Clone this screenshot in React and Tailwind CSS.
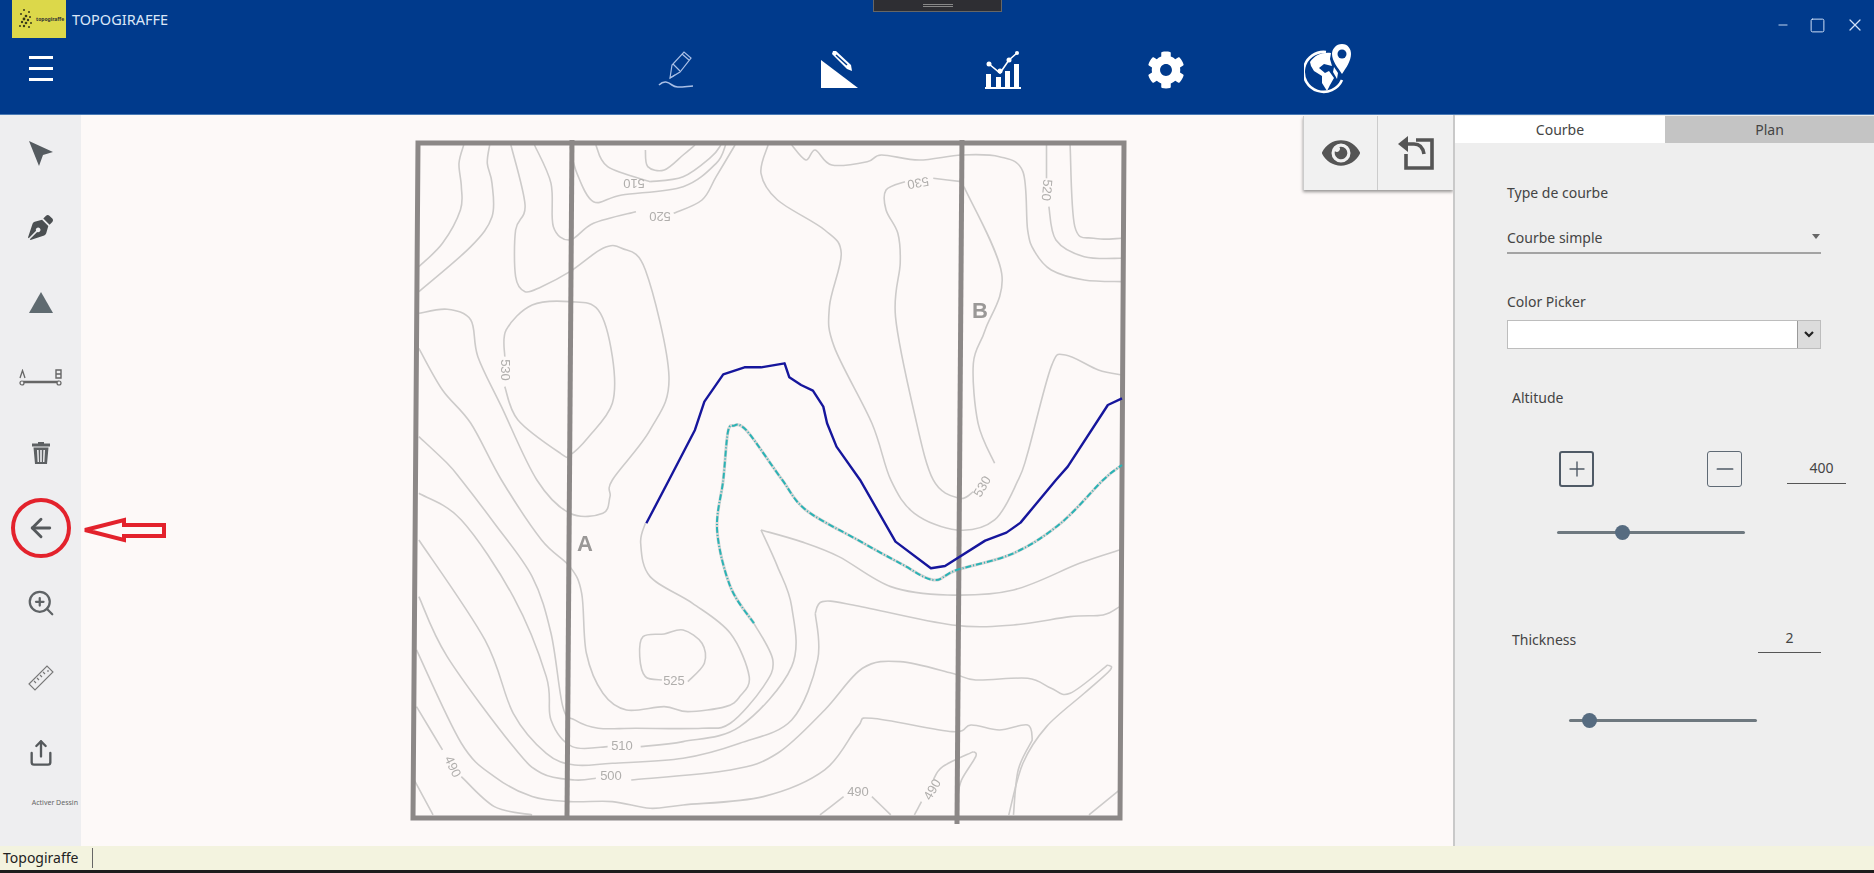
import React from "react";
import { ArrowLeft, ZoomIn, Share, Minus, Plus, Square, X } from "lucide-react";
import { FaPenNib, FaCog, FaEye } from "react-icons/fa";

// contour points were read off crops of the map, this maps them back to page pixels
const CROP = "translate(400 130) scale(.4719 .3333)";

const smooth = (pts) => {
  let d = `M${pts[0][0]} ${pts[0][1]}`;
  for (let i = 0; i < pts.length - 1; i++) {
    const p0 = pts[i - 1] || pts[i];
    const p1 = pts[i];
    const p2 = pts[i + 1];
    const p3 = pts[i + 2] || p2;
    const c1x = p1[0] + (p2[0] - p0[0]) / 6;
    const c1y = p1[1] + (p2[1] - p0[1]) / 6;
    const c2x = p2[0] - (p3[0] - p1[0]) / 6;
    const c2y = p2[1] - (p3[1] - p1[1]) / 6;
    d += ` C${c1x} ${c1y} ${c2x} ${c2y} ${p2[0]} ${p2[1]}`;
  }
  return d;
};

const straight = (pts) => "M" + pts.map((p) => p.join(" ")).join(" L");

const contours = [
  [[135,45],[125,100],[130,170],[128,240],[90,340],[40,410]],
  [[190,45],[185,100],[195,160],[195,260],[150,350],[40,485]],
  [[285,45],[320,160],[325,290],[360,330],[410,280],[500,245]],
  [[580,250],[640,210],[670,140],[710,45]],
  // the big one round the 530 summit, closes below the A line
  [[235,45],[265,225],[245,300],[245,440],[265,485],[300,470],[360,425],[430,355],[470,355],[520,420],[570,740],[530,900],[450,1050],[445,1100],[430,1150],[360,1150],[290,1050],[215,830],[165,680],[150,570],[100,538],[40,550]],
  [[222,680],[225,600],[280,525],[360,515],[420,540],[450,680],[450,820],[400,920],[360,975],[340,970],[250,870],[222,770]],
  // left diagonals
  [[40,655],[90,780],[150,880],[215,1050],[300,1230],[360,1310],[385,1390],[395,1570],[430,1690],[480,1740],[560,1730],[610,1745],[690,1730],[720,1700],[740,1640],[700,1510],[620,1420],[530,1340],[510,1240],[520,1180]],
  [[40,920],[100,1000],[130,1050],[200,1180],[280,1340],[320,1510],[345,1730],[370,1770],[420,1795],[500,1795],[640,1795],[700,1780],[770,1670],[790,1590],[750,1480]],
  [[440,1850],[365,1850],[320,1770],[310,1640],[240,1400],[130,1170],[40,1090]],
  [[765,1200],[800,1310],[830,1430],[830,1610],[720,1790],[600,1835],[510,1850]],
  [[765,1200],[850,1235],[930,1280],[1040,1370],[1160,1395],[1300,1380],[1440,1300],[1525,1260]],
  [[880,1450],[895,1415],[960,1425],[1170,1485],[1300,1485],[1420,1460],[1490,1455],[1525,1430]],
  [[880,1450],[885,1590],[830,1770],[720,1840],[600,1885],[450,1900],[370,1905],[310,1870],[240,1750],[180,1530],[40,1230]],
  [[555,1650],[520,1640],[508,1580],[515,1520],[560,1512],[600,1500],[640,1540],[645,1600],[610,1655]],
  [[1500,1605],[1420,1690],[1380,1675],[1330,1645],[1220,1650],[1170,1630],[1060,1595],[980,1615],[900,1740],[800,1870],[700,1920],[490,1950]],
  [[415,1945],[370,1950],[300,1930],[240,1850],[100,1580],[40,1400]],
  [[1500,1605],[1505,1620],[1450,1690],[1370,1790],[1320,1900],[1290,2055]],
  [[1340,1830],[1330,1785],[1270,1800],[1210,1785],[1170,1805],[1000,1765],[970,1790],[900,1920],[770,2000],[600,2025],[530,2035],[450,2015],[360,2015],[280,2000],[200,1940],[130,1840],[35,1560]],
  [[1340,1830],[1310,1920],[1300,2055]],
  [[1215,1865],[1150,1910],[1130,1950]],
  [[1105,2015],[1090,2055]],
  [[1215,1865],[1220,1880],[1190,1950],[1180,2010]],
  [[890,2055],[940,2000]],
  [[1000,2000],[1040,2055]],
  [[35,1730],[90,1860]],
  [[130,1940],[200,2030],[280,2055]],
  [[30,1950],[70,2055]],
  [[1525,1980],[1460,2055]],
  // top middle and right
  [[415,45],[440,110],[530,155]],
  [[530,155],[600,140],[660,80],[680,45]],
  [[520,60],[525,110],[560,120],[600,75],[625,45]],
  [[360,50],[375,130],[410,215],[470,195],[600,170],[670,100],[690,45]],
  [[780,45],[765,130],[800,210],[900,300],[935,370],[910,530],[920,650],[1000,880],[1040,1050],[1090,1150],[1180,1200],[1260,1170],[1310,1050],[1330,970],[1380,710],[1410,675],[1480,720],[1530,735]],
  [[830,45],[860,90],[880,60],[915,105],[990,95],[1020,75],[1100,90],[1190,75],[1270,80],[1320,125],[1330,300],[1345,365],[1380,420],[1450,450],[1530,455]],
  [[1370,45],[1370,145]],
  [[1375,230],[1390,330],[1450,380],[1530,385]],
  [[1420,45],[1430,290],[1470,325],[1530,325]],
  [[1190,155],[1130,145]],
  [[1070,155],[1030,180],[1030,240],[1055,310],[1060,400],[1050,560],[1090,850],[1130,1050],[1185,1105],[1215,1085]],
  [[1195,170],[1275,430],[1240,600],[1215,700],[1225,880],[1260,1000]],
];

const blue = [
  [[522,1180],[570,1050],[625,900],[645,815],[685,733],[730,712],[765,712],[815,700],[825,742],[850,765],[875,782],[897,830],[905,880],[925,950],[975,1050],[1050,1235],[1125,1315],[1155,1308],[1240,1232],[1285,1208],[1315,1178],[1390,1050],[1415,1010],[1500,825],[1530,805]],
];
const teal = [
  [[750,1480],[700,1370],[672,1200],[685,1050],[695,905],[708,887],[722,887],[745,920],[810,1050],[860,1140],[970,1230],[1060,1300],[1130,1350],[1180,1320],[1300,1270],[1400,1180],[1490,1050],[1530,1005]],
];

const labels = [
  ["510", 634, 182, 180], ["520", 660, 215, 180], ["530", 918, 182, 170], ["520", 1046, 190, 95],
  ["530", 504, 370, 90], ["525", 674, 682, 0], ["510", 622, 747, 0], ["500", 611, 777, 0],
  ["490", 452, 767, 65], ["490", 858, 793, 0], ["490", 933, 790, -60], ["530", 983, 487, -60],
];

const Lines = ({ list, build = smooth, ...rest }) => (
  <g transform={CROP} fill="none" {...rest}>
    {list.map((pts, i) => (
      <path key={i} d={build(pts)} vectorEffect="non-scaling-stroke" />
    ))}
  </g>
);

const MapDrawing = () => (
  <svg viewBox="81 115 1372 731" className="w-full h-full blur-[0.6px]" fontFamily="'Liberation Sans', sans-serif">
    <Lines list={contours} stroke="#cdcbca" strokeWidth="1.6" />
    <Lines list={teal} stroke="#d6d4d3" strokeWidth="3" />
    {labels.map(([t, x, y, r], i) => (
      <text key={i} x={x} y={y} fontSize="13" fill="#b0aeac" textAnchor="middle" dominantBaseline="middle" transform={`rotate(${r} ${x} ${y})`}>
        {t}
      </text>
    ))}
    <g stroke="#8c8887" strokeWidth="5" fill="none">
      <path d="M418 143 L1124 143 L1120 818 L413 818 Z" />
      <path d="M572 140 L567 818" />
      <path d="M962 140 L957 824" />
    </g>
    <text x="980" y="318" fontSize="22" fontWeight="700" fill="#9a9897" textAnchor="middle">B</text>
    <text x="585" y="551" fontSize="22" fontWeight="700" fill="#9a9897" textAnchor="middle">A</text>
    <Lines list={teal} stroke="#2ab3b5" strokeWidth="2" strokeDasharray="6 2 1 2" />
    <Lines list={blue} build={straight} stroke="#16169c" strokeWidth="2.4" strokeLinejoin="round" />
  </svg>
);

// header icons
const LogoDots = () => (
  <svg width="16" height="20" viewBox="0 0 16 20" fill="#3a3a1a">
    <circle cx="6" cy="1" r="1" /><circle cx="11" cy="3" r="1" /><circle cx="3" cy="5" r="1" />
    <circle cx="8" cy="7" r="1.3" /><circle cx="12" cy="8" r="1" /><circle cx="6" cy="10" r="1.4" />
    <circle cx="10" cy="11" r="1.2" /><circle cx="4" cy="13" r="1.2" /><circle cx="8" cy="14" r="1.3" />
    <circle cx="13" cy="14" r="1" /><circle cx="2" cy="17" r="1" /><circle cx="6" cy="17" r="1.2" />
    <circle cx="11" cy="18" r="1" />
  </svg>
);

const PencilWave = () => (
  <svg width="38" height="38" viewBox="0 0 38 38" fill="none" stroke="#a9bfe6" strokeWidth="1.2">
    <path d="M13 27 L15 14 L27 1 L34 7 L23 21 Z" />
    <path d="M16 13 L23 20 M25 3 L32 9 M13 27 L18 24" />
    <path d="M2 34 C7 29 11 31 15 34 S23 36 36 35" strokeWidth="1.6" />
  </svg>
);

const SlopeIcon = () => (
  <svg width="38" height="38" viewBox="0 0 38 38" fill="#fff">
    <path d="M0 9 L37 37 L0 37 Z" />
    <path d="M12 0 L15 0 L30 14 L31 20 L26 18 L11 3 Z" />
    <path d="M15 4 L26 14" stroke="#003a8c" strokeWidth="1.5" />
  </svg>
);

const ChartIcon = () => (
  <svg width="38" height="38" viewBox="0 0 38 38" fill="#fff">
    <path d="M1 36 H37 V38 H1 Z" />
    <path d="M2 23 h5 v13 h-5z M12 26 h5 v10 h-5z M21 20 h5 v16 h-5z M30 13 h5 v23 h-5z" />
    <path d="M5 13 L16 22 L25 9 L33 2" stroke="#fff" strokeWidth="1.6" fill="none" />
    <circle cx="5" cy="13" r="2.5" />
    <circle cx="16" cy="20" r="2.5" />
    <circle cx="25" cy="9" r="2.5" />
    <circle cx="33" cy="2" r="2" />
  </svg>
);

const GlobePin = () => (
  <svg width="48" height="50" viewBox="0 0 48 50">
    <path d="M22 8 A20 20 0 1 0 38 36" fill="none" stroke="#fff" strokeWidth="2.6" />
    <path d="M6 18 C11 11 18 8 27 9 L26 15 L28 22 L20 20 L15 24 L21 29 L25 27 L30 34 L26 41 L23 47 L18 39 L18 32 L10 27 L7 22 Z" fill="#fff" />
    <path d="M30 23 L34 29 L33 35 L29 28 Z" fill="#fff" />
    <path d="M38 0 C32 0 28 5 28 10 C28 17 34 24 38 30 C42 24 47 17 47 10 C47 5 44 0 38 0 Z" fill="#fff" />
    <circle cx="38" cy="10" r="4.5" fill="#003a8c" />
  </svg>
);

// side bar icons
const CursorIcon = () => (
  <svg width="26" height="26" viewBox="0 0 26 26" fill="#555b60">
    <path d="M1 1 L25 12 L15 15 L11 26 Z" />
  </svg>
);

const TriangleIcon = () => (
  <svg width="26" height="22" viewBox="0 0 26 22" fill="#5f6a70">
    <path d="M13 0 L25 21 L1 21 Z" />
  </svg>
);

const SegmentIcon = () => (
  <svg width="44" height="18" viewBox="0 0 44 18" fill="none" stroke="#666">
    <path d="M4 13 H40" strokeWidth="2.4" />
    <circle cx="3" cy="14" r="2" strokeWidth="1.2" fill="#eeeef0" />
    <circle cx="40" cy="14" r="2" strokeWidth="1.2" fill="#eeeef0" />
    <path d="M1 9 L3.5 1.5 L6 9" strokeWidth="1.3" />
    <path d="M37 1 H42 V9 H37 Z M37 5 H42" strokeWidth="1.4" />
  </svg>
);

const TrashIcon = () => (
  <svg width="20" height="22" viewBox="0 0 20 22" fill="#5d6063">
    <path d="M7 0 H13 V1.5 H19 V4.5 H1 V1.5 H7 Z" />
    <path d="M2.5 5.5 H17.5 L16 22 H4 Z M6 8 L6.6 20 H8 L7.6 8 Z M9.2 8 V20 H10.8 V8 Z M12.4 8 L12 20 H13.4 L14 8 Z" fillRule="evenodd" />
  </svg>
);

const RulerIcon = () => (
  <svg width="26" height="26" viewBox="0 0 26 26" fill="none" stroke="#777" strokeWidth="1.1">
    <path d="M1 19 L19 1 L25 7 L7 25 Z" />
    <path d="M6 16 L8 18 M9 13 L11 15 M12 10 L14 12 M15 7 L17 9" />
    <circle cx="20" cy="6" r="0.8" fill="#555" stroke="none" />
  </svg>
);

const UndoBox = () => (
  <svg width="36" height="36" viewBox="0 0 36 36" fill="none" stroke="#555" strokeWidth="3.6">
    <path d="M18 5 H34 V33 H8 V19" />
    <path d="M3 9 H16 C22 9 25 13 26 19" />
    <path d="M0 9 L10 1 V17 Z" fill="#555" stroke="none" />
  </svg>
);

const toolSlots = [
  { id: "cursor", icon: <CursorIcon /> },
  { id: "pen", icon: <FaPenNib size={25} color="#4b4f52" /> },
  { id: "triangle", icon: <TriangleIcon /> },
  { id: "segment", icon: <SegmentIcon /> },
  { id: "trash", icon: <TrashIcon /> },
  { id: "back", icon: <ArrowLeft size={30} color="#55595c" strokeWidth={2.3} /> },
  { id: "zoom", icon: <ZoomIn size={30} color="#5f6366" strokeWidth={1.8} /> },
  { id: "ruler", icon: <RulerIcon /> },
  { id: "share", icon: <Share size={28} color="#55595c" strokeWidth={2} /> },
];

const Sidebar = () => (
  <aside className="relative z-10 w-[81px] shrink-0 bg-[#eeeef0] flex flex-col items-center">
    {toolSlots.map((t) => (
      <div key={t.id} className="h-[75px] w-full flex items-center justify-center">
        {t.icon}
      </div>
    ))}
    <p className="mt-[8px] self-end pr-[3px] text-[7px] leading-[9px] text-[#666]">Activer Dessin</p>

    {/* annotation drawn over the screenshot */}
    <div className="absolute left-[11px] top-[383px] w-[60px] h-[60px] rounded-full border-4 border-[#e3222c]" />
    <svg className="absolute left-[81px] top-[402px]" width="86" height="26" viewBox="0 0 86 26" fill="none" stroke="#e3222c" strokeWidth="4">
      <path d="M4 13 L43 3 V8 H83 V19 H43 V23 Z" />
    </svg>
  </aside>
);

const Slider = ({ thumb, className }) => (
  <div className={`relative h-[3px] w-[188px] bg-[#6e787f] rounded-full ${className}`}>
    <div className="absolute top-[-6px] w-[15px] h-[15px] rounded-full bg-[#566b80]" style={{ left: thumb }} />
  </div>
);

const RightPanel = () => (
  <aside className="w-[421px] shrink-0 bg-[#eeeeee] border-l-2 border-[#c9c9c9] text-[14px] text-[#444]">
    <div className="flex h-[28px] pt-[1px]">
      <div className="w-[210px] bg-white flex items-center justify-center text-[14px]">Courbe</div>
      <div className="flex-1 bg-[#c4c4c4] flex items-center justify-center text-[14px]">Plan</div>
    </div>

    <div className="pl-[52px] pt-[39px]">
      <p className="h-[22px] leading-[22px]">Type de courbe</p>
      <div className="relative mt-[24px] h-[26px] w-[314px] border-b-2 border-[#a3a3a3] leading-[20px]">
        Courbe simple
        <span className="absolute right-[1px] top-[6px] border-x-[4px] border-t-[5px] border-x-transparent border-t-[#666]" />
      </div>
      <p className="mt-[37px] h-[22px] leading-[22px]">Color Picker</p>
      <div className="mt-[7px] h-[29px] w-[314px] flex bg-white border border-[#bdbdbd]">
        <div className="flex-1" />
        <div className="w-[23px] bg-[#dcdcdc] border-l border-[#9a9a9a] flex items-center justify-center">
          <svg width="10" height="7" viewBox="0 0 10 7" fill="none" stroke="#222" strokeWidth="2.2">
            <path d="M1 1 L5 5 L9 1" />
          </svg>
        </div>
      </div>

      <p className="mt-[38px] ml-[5px] h-[22px] leading-[22px]">Altitude</p>
      <div className="mt-[42px] ml-[52px] flex items-center">
        <div className="w-[35px] h-[36px] shrink-0 border-2 border-[#4f5a66] rounded-[3px] flex items-center justify-center">
          <Plus size={24} color="#4f5a66" strokeWidth={1.4} />
        </div>
        <div className="ml-[113px] w-[35px] h-[36px] shrink-0 border border-[#5f6a75] rounded-[3px] flex items-center justify-center">
          <Minus size={26} color="#4f5a66" strokeWidth={1.6} />
        </div>
        <div className="ml-[45px] w-[59px] h-[30px] shrink-0 border-b border-[#555] text-center leading-[28px] pl-[10px]">400</div>
      </div>
      <Slider thumb="58px" className="mt-[44px] ml-[50px]" />

      <div className="mt-[93px] ml-[5px] flex items-center h-[26px]">
        <p className="w-[61px] leading-[22px]">Thickness</p>
        <div className="ml-[185px] w-[63px] h-[26px] border-b border-[#555] text-center leading-[22px]">2</div>
      </div>
      <Slider thumb="13px" className="mt-[66px] ml-[62px]" />
    </div>
  </aside>
);

const Header = () => (
  <header className="relative h-[115px] shrink-0 bg-[#003a8c] border-b border-[#4a7ab5]">
    <div className="flex items-start h-[38px]">
      <div className="ml-[12px] w-[54px] h-[38px] bg-[#dcd84a] flex items-center pl-[6px] gap-[2px]">
        <LogoDots />
        <span className="text-[5px] leading-[6px] font-bold text-[#333]">topogiraffe</span>
      </div>
      <span className="ml-[6px] mt-[9px] text-[14.5px] leading-[20px] text-[#dbe6f7]">TOPOGIRAFFE</span>
      <div className="flex-1" />
      <div className="flex items-center gap-[19px] pr-[9px] pt-[15px] text-[#cfe0f7]">
        <Minus size={14} strokeWidth={1.6} />
        <Square size={17} strokeWidth={1.4} />
        <X size={20} strokeWidth={1.5} />
      </div>
    </div>

    {/* the little dark handle at the top of the window */}
    <div className="absolute left-[873px] top-0 w-[129px] h-[12px] bg-[#2e2e33] border border-t-0 border-[#666] flex flex-col items-center justify-center gap-[1px]">
      <div className="w-[30px] h-px bg-[#888]" />
      <div className="w-[30px] h-px bg-[#888]" />
    </div>

    <div className="flex mt-[5px] h-[54px]">
      <div className="ml-[29px] mt-[13px] w-[24px] flex flex-col gap-[8px]">
        <div className="h-[3px] bg-white" />
        <div className="h-[3px] bg-white" />
        <div className="h-[3px] bg-white" />
      </div>
      <div className="ml-[604px] flex items-center h-[54px]">
        <PencilWave />
        <div className="ml-[126px]"><SlopeIcon /></div>
        <div className="ml-[125px]"><ChartIcon /></div>
        <div className="ml-[125px]"><FaCog size={38} color="#fff" /></div>
        <div className="ml-[119px] -mt-[3px]"><GlobePin /></div>
      </div>
    </div>
  </header>
);

export default function App() {
  return (
    <div className="h-[873px] w-[1874px] flex flex-col overflow-hidden bg-black" style={{ fontFamily: "'Noto Sans', 'Open Sans', sans-serif" }}>
      <Header />
      <div className="flex h-[731px] shrink-0">
        <Sidebar />
        <main className="relative flex-1 bg-[#fdf9f8] overflow-hidden">
          <MapDrawing />
          <div className="absolute right-0 top-[1px] flex shadow-[0_2px_3px_rgba(0,0,0,0.4)]">
            <div className="w-[75px] h-[74px] bg-[#f1f1f1] border-l border-r border-[#ccc] flex items-center justify-center">
              <FaEye size={38} color="#555" />
            </div>
            <div className="w-[75px] h-[74px] bg-[#f1f1f1] flex items-center justify-center">
              <UndoBox />
            </div>
          </div>
        </main>
        <RightPanel />
      </div>
      <footer className="h-[24px] shrink-0 bg-[#f3f3df] flex items-center">
        <span className="ml-[3px] text-[14px] leading-[24px] text-[#222]">Topogiraffe</span>
        <div className="ml-[14px] w-px h-[20px] bg-[#666]" />
      </footer>
      <div className="h-[3px] bg-[#1c1c1c]" />
    </div>
  );
}
